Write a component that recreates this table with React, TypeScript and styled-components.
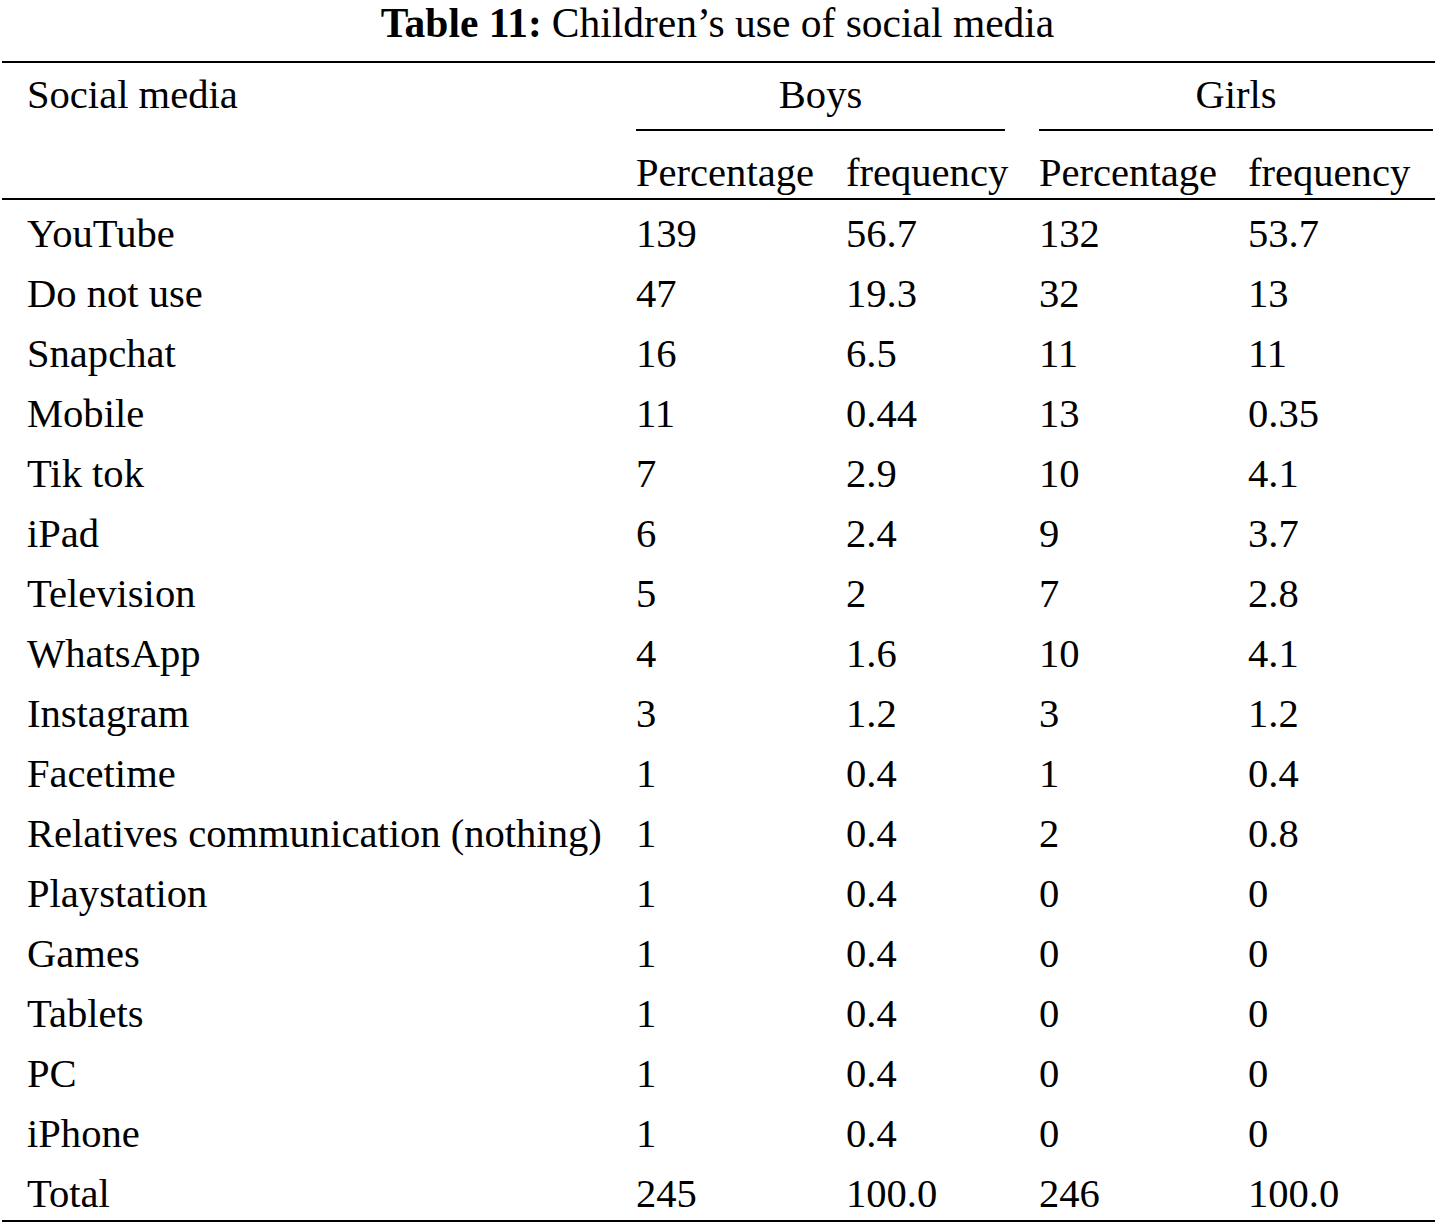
import React from "react";
import styled, { createGlobalStyle } from "styled-components";

const GlobalStyle = createGlobalStyle`
  html, body {
    margin: 0;
    padding: 0;
    background: #ffffff;
  }
  body {
    color: #000000;
    font-family: "Liberation Serif", "Times New Roman", serif;
  }
`;

const COLS = "636px 210px 193px 209px 1fr";

const Page = styled.div`
  width: 1435px;
  font-family: "Liberation Serif", "Times New Roman", serif;
  font-size: 40.6px;
  color: #000;
`;

const Caption = styled.div`
  text-align: center;
  font-size: 41.5px;
  padding-top: 3px;
  line-height: 40px;
  height: 40px;
  margin-bottom: 18px;
  white-space: nowrap;
`;

const CaptionLabel = styled.span`
  font-weight: bold;
  margin-right: 10px;
`;

const Rule = styled.div`
  height: 2px;
  background: #000;
  margin-left: 2px;
`;

const Grid = styled.div`
  display: grid;
  grid-template-columns: ${COLS};
`;

const StubHead = styled.div`
  padding: 6px 0 0 27px;
  line-height: 52px;
  white-space: nowrap;
`;

const Group = styled.div<{ $trim: number }>`
  grid-column: span 2;
  display: flex;
  flex-direction: column;
  padding-right: ${(p) => p.$trim}px;
`;

const GroupLabel = styled.div`
  text-align: center;
  padding-top: 6px;
  line-height: 52px;
  padding-bottom: 8px;
`;

const CmidRule = styled.div`
  height: 2px;
  background: #000;
`;

const SubHead = styled.div<{ $first?: boolean }>`
  padding-top: 17px;
  line-height: 50px;
  padding-left: ${(p) => (p.$first ? 27 : 0)}px;
  white-space: nowrap;
`;

const Body = styled.div`
  display: flex;
  flex-direction: column;
`;

const Row = styled.div`
  display: grid;
  grid-template-columns: ${COLS};
`;

const Cell = styled.div<{ $first?: boolean }>`
  padding-top: 8px;
  line-height: 52px;
  padding-left: ${(p) => (p.$first ? 27 : 0)}px;
  white-space: nowrap;
`;

const rows: [string, string, string, string, string][] = [
  ["YouTube", "139", "56.7", "132", "53.7"],
  ["Do not use", "47", "19.3", "32", "13"],
  ["Snapchat", "16", "6.5", "11", "11"],
  ["Mobile", "11", "0.44", "13", "0.35"],
  ["Tik tok", "7", "2.9", "10", "4.1"],
  ["iPad", "6", "2.4", "9", "3.7"],
  ["Television", "5", "2", "7", "2.8"],
  ["WhatsApp", "4", "1.6", "10", "4.1"],
  ["Instagram", "3", "1.2", "3", "1.2"],
  ["Facetime", "1", "0.4", "1", "0.4"],
  ["Relatives communication (nothing)", "1", "0.4", "2", "0.8"],
  ["Playstation", "1", "0.4", "0", "0"],
  ["Games", "1", "0.4", "0", "0"],
  ["Tablets", "1", "0.4", "0", "0"],
  ["PC", "1", "0.4", "0", "0"],
  ["iPhone", "1", "0.4", "0", "0"],
  ["Total", "245", "100.0", "246", "100.0"],
];

export default function App() {
  return (
    <Page>
      <GlobalStyle />
      <Caption>
        <CaptionLabel>Table 11:</CaptionLabel>
        Children’s use of social media
      </Caption>
      <Rule />
      <Grid>
        <StubHead>Social media</StubHead>
        <Group $trim={34}>
          <GroupLabel>Boys</GroupLabel>
          <CmidRule />
        </Group>
        <Group $trim={2}>
          <GroupLabel>Girls</GroupLabel>
          <CmidRule />
        </Group>
        <SubHead $first />
        <SubHead>Percentage</SubHead>
        <SubHead>frequency</SubHead>
        <SubHead>Percentage</SubHead>
        <SubHead>frequency</SubHead>
      </Grid>
      <Rule />
      <Body>
        {rows.map((r) => (
          <Row key={r[0]}>
            {r.map((v, i) => (
              <Cell key={i} $first={i === 0}>
                {v}
              </Cell>
            ))}
          </Row>
        ))}
      </Body>
      <Rule />
    </Page>
  );
}
